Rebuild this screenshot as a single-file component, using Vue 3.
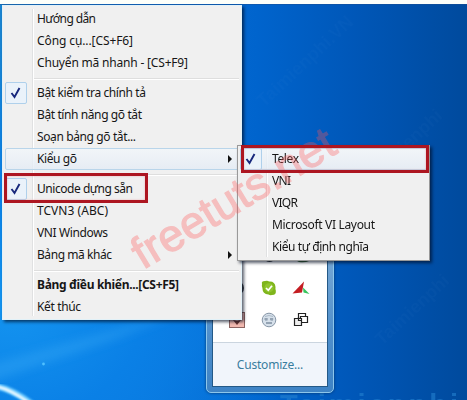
<script setup>
const groups = [
  [
    { label: 'Hướng dẫn', w: 59 },
    { label: 'Công cụ...[CS+F6]', w: 96 },
    { label: 'Chuyển mã nhanh - [CS+F9]', w: 151 },
  ],
  [
    { label: 'Bật kiểm tra chính tả', w: 109, checked: true },
    { label: 'Bật tính năng gõ tắt', w: 105 },
    { label: 'Soạn bảng gõ tắt...', w: 99 },
    { label: 'Kiểu gõ', w: 40, arrow: true, active: true },
  ],
  [
    { label: 'Unicode dựng sẵn', w: 96, checked: true },
    { label: 'TCVN3 (ABC)', w: 71 },
    { label: 'VNI Windows', w: 71 },
    { label: 'Bảng mã khác', w: 75, arrow: true },
  ],
  [
    { label: 'Bảng điều khiển...[CS+F5]', w: 142, bold: true },
    { label: 'Kết thúc', w: 44 },
  ],
]
const methods = [
  { label: 'Telex', w: 27, checked: true, active: true },
  { label: 'VNI', w: 19 },
  { label: 'VIQR', w: 26 },
  { label: 'Microsoft VI Layout', w: 103 },
  { label: 'Kiểu tự định nghĩa', w: 97 },
]
</script>

<template>
  <main class="desktop">
    <svg class="wallpaper" viewBox="0 0 467 396" preserveAspectRatio="none">
      <defs>
        <filter id="soft"><feGaussianBlur stdDeviation="5" /></filter>
        <filter id="glow"><feGaussianBlur stdDeviation="1" /></filter>
      </defs>
      <path d="M-10 360 L190 305 L115 335 L-10 378Z" fill="#38a8f5" opacity=".4" filter="url(#soft)" />
      <path d="M-5 382 Q12 385 32 400" fill="none" stroke="#6fccff" stroke-width="6" filter="url(#glow)" />
      <path d="M-5 382 Q10 385 28 398" fill="none" stroke="#fff" stroke-width="2.500" filter="url(#glow)" />
      <circle cx="43.5" cy="360" r="1.4" fill="#4fc0ff" />
      <text x="280" y="411" class="site" textLength="178">Taimienphi</text>
      <g class="faint">
        <text transform="translate(264 104) rotate(-43)">Taimienphi.VN</text>
        <text transform="translate(375 177) rotate(-43)">Taimienphi</text>
        <text transform="translate(382 342) rotate(-43)">Taimienphi</text>
      </g>
    </svg>

    <section class="tray">
      <div class="tray-body">
        <div class="icons">
          <svg viewBox="0 0 16 16"><circle cx="8" cy="6" r="6" fill="#273039" /></svg>
          <svg viewBox="0 0 16 16"><circle cx="8.500" cy="7.500" r="6.500" fill="#303335" /></svg>
          <svg viewBox="0 0 16 16"><path d="M0 4h16v9q-4 2-10 1L0 11Z" fill="#3f6a35" /><path d="M0 10h8v3H1Z" fill="#c46135" /></svg>
          <svg viewBox="0 0 16 16"><circle cx="8" cy="8" r="7" fill="#3d4045" /></svg>
          <svg viewBox="0 0 16 16">
            <path d="M1 4Q0 1 4 1q3-.5 4 .5Q14 1 14.500 7q-.3 2 .3 3.500Q15.500 15 11 15q-2 .5-3.500-.5Q1.500 14 1.400 8 .5 6 1 4Z" fill="#7fb51c" />
            <circle cx="8" cy="7.800" r="4.600" fill="#91c52f" />
            <path d="m5 8 2.300 2.300L11 5.800" fill="none" stroke="#fff" stroke-width="1.700" />
          </svg>
          <svg viewBox="0 0 16 16"><path d="M11 1.500-.5 13.500 9 12.500Z" fill="#c41d22" /><path d="m10 7.500 6.500 6.500-6-1.500Z" fill="#36c45c" /></svg>
          <svg viewBox="0 0 16 16"><rect x=".5" y=".5" width="15" height="15" fill="#f2b9b0" stroke="#8d6461" /><path d="m4 8 4 5 4-5-4 1Z" fill="#693431" /></svg>
          <svg viewBox="0 0 16 16">
            <circle cx="8" cy="8" r="6.800" fill="#d6e0ea" stroke="#8796a7" />
            <path d="M3.500 7h3.200M9 7h3.200M5 11h6" stroke="#52677c" />
            <path d="M4 8.500h2.500M9.500 8.500H12M4 4.500q4-2 8 0" fill="none" stroke="#a0afbe" stroke-width=".8" />
          </svg>
          <svg viewBox="0 0 16 16" fill="none" stroke="#222" stroke-width="1.200">
            <path d="M5.500 1.500h7v7h-7Z" /><path d="M7.500 4.500h7v6h-7Z" fill="#fff" /><path d="M1.500 6.500h7v7h-7Z" fill="#eee" /><path d="M5.500 5v3.500H9" />
          </svg>
        </div>
        <footer>Customize...</footer>
      </div>
    </section>

    <nav class="menu main">
      <template v-for="(group, g) in groups" :key="g">
        <hr v-if="g" />
        <div v-for="item in group" :key="item.label" class="row" :class="{ active: item.active, bold: item.bold }">
          <span class="check" :class="{ on: item.checked }">
            <svg v-if="item.checked" viewBox="0 0 12 12"><path d="m1.500 6 3 4L9.500 1" /></svg>
          </span>
          <svg class="label" height="22"><text x="0" y="15" :textLength="item.w">{{ item.label }}</text></svg>
          <i v-if="item.arrow" class="arrow"></i>
        </div>
      </template>
    </nav>

    <nav class="menu sub">
      <div v-for="item in methods" :key="item.label" class="row" :class="{ active: item.active }">
        <span class="check" :class="{ on: item.checked }">
          <svg v-if="item.checked" viewBox="0 0 12 12"><path d="m1.500 6 3 4L9.500 1" /></svg>
        </span>
        <svg class="label" height="22"><text x="0" y="15" :textLength="item.w">{{ item.label }}</text></svg>
      </div>
    </nav>

    <svg class="watermark" viewBox="0 0 467 400">
      <text transform="translate(143 270) rotate(-31)" textLength="229">freetuts.net</text>
    </svg>
    <div class="mark encoding"></div>
    <div class="mark method"></div>
  </main>
</template>

<style>
body { margin: 0; overflow: hidden; }
</style>

<style scoped>
.desktop {
  position: relative;
  width: 467px;
  height: 400px;
  overflow: hidden;
  box-sizing: border-box;
  border-top: 4px solid #fdfffa;
  background:
    linear-gradient(180deg, #1a4f92 0, transparent 1px),
    radial-gradient(ellipse 300px 260px at 10px 300px, #1494f0 0, #0a80e6 45%, transparent 100%),
    linear-gradient(90deg, #1a85d2 0, #0b74da 25%, #0064cd 55%, #0057b8 76%, #004a9d 100%);
  font-family: "Noto Sans", "Open Sans", sans-serif;
  font-size: 12px;
}
.wallpaper { position: absolute; inset: 0; width: 467px; height: 396px; }
.site { font: bold 29px "Liberation Sans", sans-serif; fill: #2481cf; opacity: .6; }
.faint { font: bold 18px "Liberation Sans", sans-serif; fill: #7dbaf0; opacity: .035; }
.menu {
  position: absolute;
  box-sizing: border-box;
  background: #f0f0f0;
  box-shadow: 2px 2px 3px rgba(0, 10, 30, .65);
}
.menu::before {
  content: "";
  position: absolute;
  top: 3px;
  bottom: 3px;
  left: 29px;
  width: 1px;
  background: #e0e1e2;
  border-right: 1px solid #fff;
}
.main { left: 2px; top: 1px; width: 240px; height: 315px; padding: 2px; border: 1px solid #e1f1f8; }
.sub { left: 237px; top: 141px; width: 193px; height: 116px; padding: 2px; border: 1px solid #999; }
.sub::before { left: 28px; }
.row { position: relative; display: flex; align-items: center; height: 22px; box-sizing: border-box; }
.row.active::before {
  content: "";
  position: absolute;
  inset: 0;
  border: 1px solid #b9d5ea;
  border-radius: 2px;
  background: linear-gradient(rgba(242, 246, 250, .8), rgba(228, 236, 245, .8));
}
.check { position: relative; display: grid; place-items: center; flex: none; box-sizing: border-box; width: 22px; height: 22px; margin-right: 10px; }
.check.on { border: 1px solid #afd0eb; border-radius: 2px; background: #eaf2fa; }
.check svg { width: 12px; height: 12px; }
.check path { fill: none; stroke: #17277c; stroke-width: 1.9; }
.label { position: relative; flex: 1; min-width: 0; overflow: visible; }
.label text { fill: #161616; }
.bold text { font-weight: 700; }
.arrow { position: relative; margin-right: 7px; border-left: 4px solid #111; border-top: 4px solid transparent; border-bottom: 4px solid transparent; }
hr { height: 1px; margin: 4px 0 2px 27px; border: 0; border-bottom: 1px solid #fff; background: #dedede; }
.tray {
  position: absolute;
  left: 206px;
  top: 230px;
  width: 128px;
  height: 159px;
  box-sizing: border-box;
  padding: 5px;
  border: 1px solid #8dc6ea;
  border-radius: 5px;
  background: linear-gradient(#7fadd7, #4e8ecb 65%, #3e83c5);
  box-shadow: 0 0 3px #063469;
}
.tray-body { display: flex; flex-direction: column; height: 147px; box-sizing: border-box; border: 1px solid #245987; background: #fff; }
.icons { display: grid; grid-template-columns: repeat(3, 16px); grid-auto-rows: 16px; gap: 16px; margin: 7px 0 0 16px; }
.icons svg { width: 16px; height: 16px; overflow: visible; }
.tray footer { display: grid; place-items: center; height: 43px; margin-top: auto; border-top: 1px solid #cbd5df; background: #f1f5fb; color: #397d9e; font-size: 12px; letter-spacing: -.2px; }
.mark { position: absolute; box-sizing: border-box; border: 3px solid #ad1621; box-shadow: inset 0 0 2px #e7a7aa; }
.encoding { left: 4px; top: 169px; width: 144px; height: 30px; }
.method { left: 241px; top: 141px; width: 188px; height: 28px; }
.watermark { position: absolute; left: 0; top: -4px; width: 467px; height: 400px; pointer-events: none; }
.watermark text { font: 45px "Liberation Sans", sans-serif; fill: #ff5555; stroke: #ff5555; stroke-width: 1.2; opacity: .32; }
</style>
